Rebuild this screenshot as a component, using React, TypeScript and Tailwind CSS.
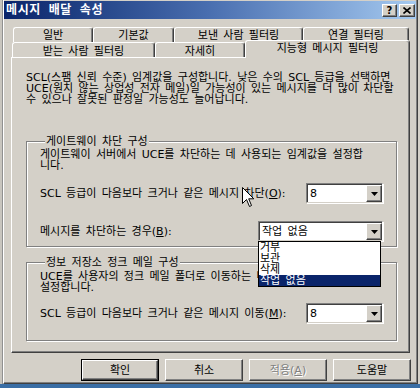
import React from "react";

const raised =
  "border border-t-white border-l-white border-r-[#404040] border-b-[#404040] shadow-[inset_-1px_-1px_0_#808080]";
const tab =
  "flex items-center justify-center border-t border-l border-r border-t-white border-l-white border-r-[#404040] rounded-t-[3px] shadow-[inset_-1px_0_0_#808080] whitespace-nowrap";
const group =
  "border border-[#808080] shadow-[inset_1px_1px_0_#fff,1px_1px_0_#fff] px-[13px]";

function Combo({ value, children }: { value: string; children?: React.ReactNode }) {
  return (
    <div className="relative flex h-[20px] bg-white border border-t-[#808080] border-l-[#808080] border-r-white border-b-[#d4d0c8] shadow-[inset_1px_1px_0_#404040,1px_1px_0_#fff] pt-[1px] pl-[1px]">
      <div className="flex-1 flex items-center pl-[2px] leading-[11px]">{value}</div>
      <div className={`w-[16px] h-[17px] flex items-center justify-center bg-[#d4d0c8] ${raised}`}>
        <svg width="7" height="4" viewBox="0 0 7 4">
          <path d="M0 0h7L3.5 4z" fill="#000" />
        </svg>
      </div>
      {children}
    </div>
  );
}

function Button({ label, dflt, disabled }: { label: React.ReactNode; dflt?: boolean; disabled?: boolean }) {
  return (
    <div className={`w-[78px] h-[22px] ${dflt ? "border border-black" : ""}`}>
      <div
        className={`h-full flex items-center justify-center bg-[#d4d0c8] ${raised} ${
          disabled ? "text-[#808080] [text-shadow:1px_1px_0_#fff]" : "text-black"
        }`}
      >
        {label}
      </div>
    </div>
  );
}

export default function App() {
  return (
    <div className="relative w-[420px] h-[388px] overflow-hidden bg-[#3a6ea5] text-[11px] leading-[11px] [word-spacing:1.8px] text-black font-['DejaVu_Sans','Noto_Sans_CJK_KR',_sans-serif]">
      <div className="flex h-[384px]">
        {/* window behind */}
        <div className="w-[3px] shrink-0 bg-[#c8c5be] border-r border-[#909090]" />

        {/* dialog */}
        <div className="w-[415px] shrink-0 flex flex-col bg-[#d4d0c8] border-l border-white border-b border-b-[#404040] border-r border-r-[#404040] shadow-[inset_-1px_-1px_0_#808080]">
          {/* title bar */}
          <div className="mt-[1px] mr-[1px] h-[18px] flex items-center bg-linear-to-r from-[#0a246a] via-[#4a6fb0] to-[#a6caf0] pl-[2px] pr-[1px]">
            <span className="text-white font-bold text-[12px] tracking-[0.6px] [word-spacing:3px]">메시지 배달 속성</span>
            <div className="flex-1" />
            <div className={`w-[15px] h-[13px] flex items-center justify-center bg-[#d4d0c8] ${raised} font-bold text-[10px]`}>?</div>
            <div className={`ml-[2px] w-[16px] h-[13px] flex items-center justify-center bg-[#d4d0c8] ${raised}`}>
              <svg width="8" height="7" viewBox="0 0 8 7">
                <path d="M0.5 0.5L7.5 6.5M7.5 0.5L0.5 6.5" stroke="#000" strokeWidth="1.6" />
              </svg>
            </div>
          </div>

          {/* tabs row 1 */}
          <div className="mt-[8px] h-[15px] flex pl-[9px]">
            <div className={`${tab} w-[80px]`}>일반</div>
            <div className={`${tab} w-[81px]`}>기본값</div>
            <div className={`${tab} w-[129px]`}>보낸 사람 필터링</div>
            <div className={`${tab} w-[106px]`}>연결 필터링</div>
          </div>
          {/* tabs row 2 */}
          <div className="h-[15px] flex items-end pl-[8px]">
            <div className={`${tab} w-[143px] h-[15px] pt-[2px]`}>받는 사람 필터링</div>
            <div className={`${tab} w-[90px] h-[15px] pt-[2px]`}>자세히</div>
            <div className={`${tab} relative z-10 w-[165px] h-[18px] -mb-[1px] bg-[#d4d0c8] pb-[3px]`}>
              지능형 메시지 필터링
            </div>
          </div>

          {/* panel */}
          <div className={`ml-[7px] w-[399px] h-[296px] pt-[14px] pl-[14px] ${raised}`}>
            <p className="whitespace-nowrap">
              SCL(스팸 신뢰 수준) 임계값을 구성합니다. 낮은 수의 SCL 등급을 선택하면
              <br />
              UCE(원치 않는 상업성 전자 메일)일 가능성이 있는 메시지를 더 많이 차단할
              <br />
              수 있으나 잘못된 판정일 가능성도 늘어납니다.
            </p>

            {/* gateway group */}
            <fieldset className={`${group} mt-[31px] w-[371px] h-[111px]`}>
              <legend className="ml-[5px] px-[1px] bg-[#d4d0c8]">게이트웨이 차단 구성</legend>
              <p className="pt-[2px] whitespace-nowrap">
                게이트웨이 서버에서 UCE를 차단하는 데 사용되는 임계값을 설정합
                <br />
                니다.
              </p>
              <div className="mt-[12px] flex items-center justify-between">
                <span>
                  SCL 등급이 다음보다 크거나 같은 메시지 차단(<span className="underline">O</span>):
                </span>
                <div className="w-[77px]">
                  <Combo value="8" />
                </div>
              </div>
              <div className="mt-[18px] flex items-center justify-between">
                <span>
                  메시지를 차단하는 경우(<span className="underline">B</span>):
                </span>
                <div className="relative z-20 w-[125px]">
                  <Combo value="작업 없음">
                    <div className="absolute left-[-1px] top-[19px] w-[123px] bg-white border border-black">
                      <div className="h-[11px] pl-[1px]">거부</div>
                      <div className="h-[11px] pl-[1px]">보관</div>
                      <div className="h-[11px] pl-[1px]">삭제</div>
                      <div className="h-[11px] pl-[1px] bg-[#0a246a] text-white">작업 없음</div>
                    </div>
                  </Combo>
                </div>
              </div>
            </fieldset>

            {/* store group */}
            <fieldset className={`${group} mt-[10px] w-[371px] h-[84px]`}>
              <legend className="ml-[5px] px-[1px] bg-[#d4d0c8]">정보 저장소 정크 메일 구성</legend>
              <p className="pt-[3px] whitespace-nowrap">
                UCE를 사용자의 정크 메일 폴더로 이동하는 데
                <br />
                설정합니다.
              </p>
              <div className="mt-[10px] flex items-center justify-between">
                <span>
                  SCL 등급이 다음보다 크거나 같은 메시지 이동(<span className="underline">M</span>):
                </span>
                <div className="w-[77px]">
                  <Combo value="8" />
                </div>
              </div>
            </fieldset>
          </div>

          {/* buttons */}
          <div className="mt-[6px] pl-[77px] flex gap-[6px]">
            <Button label="확인" dflt />
            <Button label="취소" />
            <Button
              label={
                <span>
                  적용(<span className="underline">A</span>)
                </span>
              }
              disabled
            />
            <Button label="도움말" />
          </div>
        </div>
        <div className="flex-1 bg-[#d4d0c8]" />
      </div>

      {/* mouse pointer */}
      <svg className="absolute left-[242px] top-[187px]" width="13" height="21" viewBox="0 0 13 21">
        <path d="M0.5 0.5V16.5L4.5 12.5L7.5 19.5L9.5 18.5L6.7 11.8H11.8Z" fill="#fff" stroke="#000" strokeWidth="1" />
      </svg>
    </div>
  );
}
